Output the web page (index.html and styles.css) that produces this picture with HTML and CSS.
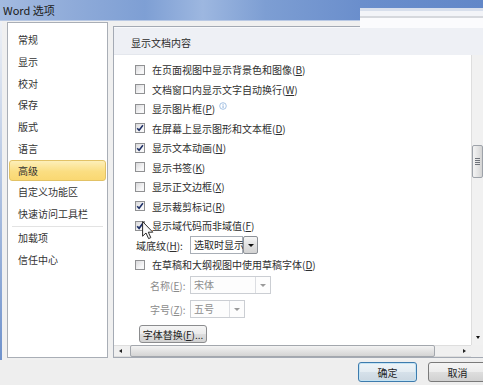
FILE: index.html
```html
<!DOCTYPE html>
<html lang="zh-CN">
<head>
<meta charset="utf-8">
<title>Word 选项</title>
<link rel="stylesheet" href="styles.css">
</head>
<body>
<div class="window">
  <div class="titlebar">Word 选项</div>
  <div class="main">
    <ul class="nav">
      <li>常规</li>
      <li>显示</li>
      <li>校对</li>
      <li>保存</li>
      <li>版式</li>
      <li>语言</li>
      <li class="active">高级</li>
      <li>自定义功能区</li>
      <li>快速访问工具栏</li>
      <li class="sep"></li>
      <li>加载项</li>
      <li>信任中心</li>
    </ul>
    <div class="content">
      <div class="section-head">显示文档内容</div>
      <div class="body">
        <div class="scroll">
          <div class="row"><span class="cb"></span><span>在页面视图中显示背景色和图像(<u>B</u>)</span></div>
          <div class="row"><span class="cb"></span><span>文档窗口内显示文字自动换行(<u>W</u>)</span></div>
          <div class="row"><span class="cb"></span><span>显示图片框(<u>P</u>)</span><svg class="info" width="8" height="8" viewBox="0 0 8 8"><circle cx="4" cy="4" r="3.3" fill="#fff" stroke="#9bbbe0" stroke-width="0.9"/><rect x="3.6" y="3.4" width="0.9" height="2.6" fill="#7fa6d6"/><rect x="3.6" y="1.9" width="0.9" height="0.9" fill="#7fa6d6"/></svg></div>
          <div class="row"><span class="cb checked"><svg width="8" height="8" viewBox="0 0 8 8"><path d="M1.2 4.2 L3.1 6.3 L6.9 1.2" fill="none" stroke="#1d2f66" stroke-width="1.5"/></svg></span><span>在屏幕上显示图形和文本框(<u>D</u>)</span></div>
          <div class="row"><span class="cb checked"><svg width="8" height="8" viewBox="0 0 8 8"><path d="M1.2 4.2 L3.1 6.3 L6.9 1.2" fill="none" stroke="#1d2f66" stroke-width="1.5"/></svg></span><span>显示文本动画(<u>N</u>)</span></div>
          <div class="row"><span class="cb"></span><span>显示书签(<u>K</u>)</span></div>
          <div class="row"><span class="cb"></span><span>显示正文边框(<u>X</u>)</span></div>
          <div class="row"><span class="cb checked"><svg width="8" height="8" viewBox="0 0 8 8"><path d="M1.2 4.2 L3.1 6.3 L6.9 1.2" fill="none" stroke="#1d2f66" stroke-width="1.5"/></svg></span><span>显示裁剪标记(<u>R</u>)</span></div>
          <div class="row"><span class="cb checked"><svg width="8" height="8" viewBox="0 0 8 8"><path d="M1.2 4.2 L3.1 6.3 L6.9 1.2" fill="none" stroke="#1d2f66" stroke-width="1.7"/></svg></span><span>显示域代码而非域值(<u>F</u>)</span></div>
          <div class="field">
            <span class="flabel wide">域底纹(<u>H</u>):</span>
            <span class="select">选取时显示</span>
            <span class="drop"><i class="tri"></i></span>
          </div>
          <div class="row"><span class="cb"></span><span>在草稿和大纲视图中使用草稿字体(<u>D</u>)</span></div>
          <div class="field sub name">
            <span class="flabel">名称(<u>E</u>):</span>
            <span class="combo disabled w81"><span class="ctext">宋体</span><span class="carrow"><i class="tri grey"></i></span></span>
          </div>
          <div class="field sub size">
            <span class="flabel">字号(<u>Z</u>):</span>
            <span class="combo disabled w55"><span class="ctext">五号</span><span class="carrow"><i class="tri grey"></i></span></span>
          </div>
          <div class="btnrow"><button class="small-btn">字体替换(<u>F</u>)...</button></div>
        </div>
        <div class="vscroll">
          <div class="vthumb"><span class="grip"></span></div>
          <i class="tri down"></i>
        </div>
      </div>
      <div class="hscroll">
        <span class="harrow"><i class="tri left"></i></span>
        <span class="hthumb"></span>
        <span class="htrack"></span>
        <span class="harrow"><i class="tri right"></i></span>
        <span class="corner"></span>
      </div>
    </div>
  </div>
  <div class="footer">
    <button class="btn default">确定</button>
    <button class="btn">取消</button>
  </div>
</div>
<div class="patch"></div>
<svg class="cursor" width="12" height="19" viewBox="0 0 12 19"><path d="M0.6 0.6 L0.6 15.2 L4 12 L6.6 17.6 L8.8 16.6 L6.3 11.2 L10.8 11.2 Z" fill="#fafafa" stroke="#2a2a2a" stroke-width="1"/></svg>
</body>
</html>
```

FILE: styles.css
```css
* { box-sizing: border-box; }

body {
  margin: 0;
  width: 483px;
  height: 385px;
  overflow: hidden;
  position: relative;
  background: #efefef;
  font-family: "Noto Sans CJK SC", "Noto Sans", sans-serif;
  font-size: 10px;
  color: #2e2e2e;
}

u { text-decoration: underline; text-underline-offset: 1px; }

.window { display: flex; flex-direction: column; width: 483px; height: 385px; }

.titlebar {
  height: 21px;
  line-height: 20px;
  padding-left: 3px;
  font-size: 11px;
  color: #1b1b1b;
  background: linear-gradient(90deg, #a3bae0 0%, #8fabd9 15%, #7e9fd4 30%, #9db7e0 42%, #7d9ed3 55%, #6a8ecc 75%, #6287c8 100%);
  border-bottom: 1px solid #b9c9e4;
}

.main {
  display: flex;
  gap: 5px;
  height: 339px;
  padding: 1px 0 0 7px;
  background:
    linear-gradient(#eef1f6, #6f92cc) left top / 2px 100% no-repeat,
    #f0f0f0;
}

/* ---- left navigation ---- */
.nav {
  list-style: none;
  margin: 0;
  padding: 6px 0 0;
  width: 101px;
  height: 336px;
  flex-shrink: 0;
  background: #fff;
  border: 1px solid #a9aeb6;
}
.nav li {
  height: 21.75px;
  line-height: 21.75px;
  margin: 0 1px;
  padding-left: 9px;
  color: #333;
  white-space: nowrap;
}
.nav li.active {
  padding-left: 8px;
  line-height: 19.75px;
  border: 1px solid #e2c266;
  border-radius: 3px;
  background: linear-gradient(#fdefb9, #fbde82 55%, #fad872);
}
.nav li.sep {
  height: 1px;
  margin: 1px 4px 0;
  padding: 0;
  background: #e3e3e3;
}

/* ---- right content ---- */
.content {
  width: 372px;
  height: 332px;
  flex-shrink: 0;
  margin-top: 4px;
  border: 1px solid #a4aab4;
  background: #fff;
  display: flex;
  flex-direction: column;
}

.section-head {
  height: 28px;
  padding: 3px 0 0 17px;
  line-height: 24px;
  background: #eef0f5;
  border-top: 1px solid #f8f9fb;
  border-bottom: 1px solid #e4e7ed;
  color: #2b2b2b;
}

.body { flex: 1; display: flex; min-height: 0; }

.scroll { flex: 1; padding: 5px 0 0 21px; }

.row {
  display: flex;
  align-items: center;
  height: 19.5px;
  gap: 7px;
  white-space: nowrap;
}

.cb {
  width: 10px;
  height: 10px;
  flex-shrink: 0;
  border: 1px solid #909193;
  background: linear-gradient(135deg, #d9d9db, #f7f7f8 70%);
  display: flex;
  align-items: center;
  justify-content: center;
}
.cb svg { display: block; }

.info { margin-left: -3px; margin-top: -6px; }

.field {
  display: flex;
  align-items: center;
  height: 19.5px;
  padding-left: 1px;
  white-space: nowrap;
}
.flabel { width: 54px; flex-shrink: 0; }
.field.sub { padding-left: 15px; color: #8b8b8b; }
.field.sub .flabel { width: 40px; }
.field.name { height: 21px; }
.field.size { margin-top: 4px; }

.select {
  width: 53px;
  height: 18px;
  line-height: 16px;
  padding-left: 3px;
  border: 1px solid #a8aeb6;
  background: #fff;
  color: #2a2a2a;
}
.drop {
  width: 15px;
  height: 18px;
  border: 1px solid #8c9096;
  border-radius: 2px;
  background: linear-gradient(#f6f6f6, #e1e1e1 50%, #d3d3d3);
  display: flex;
  align-items: center;
  justify-content: center;
}

.combo {
  height: 18px;
  display: flex;
  border: 1px solid #cbced3;
  background: #fdfdfd;
}
.combo.w81 { width: 81px; }
.combo.w55 { width: 55px; }
.ctext { flex: 1; line-height: 16px; padding-left: 3px; color: #8e8e8e; }
.carrow {
  width: 15px;
  border-left: 1px solid #dcdee2;
  display: flex;
  align-items: center;
  justify-content: center;
}

.tri {
  display: block;
  width: 0;
  height: 0;
  border-left: 3px solid transparent;
  border-right: 3px solid transparent;
  border-top: 3px solid #111;
}
.tri.grey { border-top-color: #9a9a9a; }

.btnrow { margin-top: 6px; padding-left: 4px; }
.small-btn {
  width: 68px;
  height: 18px;
  padding: 0;
  font: inherit;
  color: #222;
  border: 1px solid #8b8c8e;
  border-radius: 3px;
  background: linear-gradient(#f5f5f5, #ebebeb 50%, #dddddd 51%, #d2d2d2);
}

/* vertical scrollbar */
.vscroll {
  width: 13px;
  flex-shrink: 0;
  display: flex;
  flex-direction: column;
  align-items: center;
  padding: 90px 0 6px;
  background: linear-gradient(90deg, #dedede 0 1px, #f1f1f1 1px 12px, #e0e0e0 12px);
}
.vthumb {
  width: 11px;
  height: 33px;
  border: 1px solid #9ea3aa;
  border-radius: 2px;
  background: linear-gradient(90deg, #f4f4f4, #e2e2e2 60%, #d3d3d3);
  display: flex;
  align-items: center;
  justify-content: center;
}
.grip {
  width: 5px;
  height: 7px;
  background: repeating-linear-gradient(#6f737a 0 1px, transparent 1px 2px);
}
.tri.down { margin-top: auto; border-left-width: 2.5px; border-right-width: 2.5px; border-top-width: 3px; }

/* horizontal scrollbar */
.hscroll {
  height: 12px;
  display: flex;
  background: linear-gradient(#dedede 0 1px, #f0f0f0 1px 11px, #dedede 11px);
}
.harrow {
  width: 13px;
  display: flex;
  align-items: center;
  justify-content: center;
}
.harrow:nth-of-type(4) { width: 14px; }
.tri.left {
  border-top: 2.5px solid transparent;
  border-bottom: 2.5px solid transparent;
  border-right: 3px solid #222;
  border-left: 0;
}
.tri.right {
  border-top: 2.5px solid transparent;
  border-bottom: 2.5px solid transparent;
  border-left: 3px solid #222;
  border-right: 0;
}
.hthumb {
  width: 305px;
  margin-left: 3px;
  border: 1px solid #a3a7ad;
  border-radius: 2px;
  background: linear-gradient(#f3f3f3, #e3e3e3 50%, #d4d4d4);
}
.htrack { flex: 1; }
.corner { width: 13px; background: #f0f0f0; }

/* footer */
.footer {
  display: flex;
  gap: 11px;
  height: 25px;
  padding: 2px 0 0 358px;
  background: #eeeeee;
}
.btn {
  width: 59px;
  height: 20px;
  flex-shrink: 0;
  padding: 0;
  font: inherit;
  color: #222;
  border: 1px solid #7a7a7a;
  border-radius: 3px;
  background: linear-gradient(#f4f4f4, #ececec 50%, #dedede 51%, #d1d1d1);
}
.btn.default {
  border-color: #3d7bad;
  box-shadow: inset 0 0 0 1px #c3e3f4;
  background: linear-gradient(#eef4f8, #e4ecf2 50%, #d6e1ea 51%, #cbd7e1);
}

/* overlays */
.patch {
  position: absolute;
  left: 360px;
  top: 8px;
  width: 123px;
  height: 47px;
  background: linear-gradient(#d8dfec 0 3px, #f3f4f8 3px 8px, #d6d8dd 8px 10px, #fbfbfd 10px 20px, #eef0f5 20px);
}
.cursor {
  position: absolute;
  left: 142px;
  top: 221px;
}
```
